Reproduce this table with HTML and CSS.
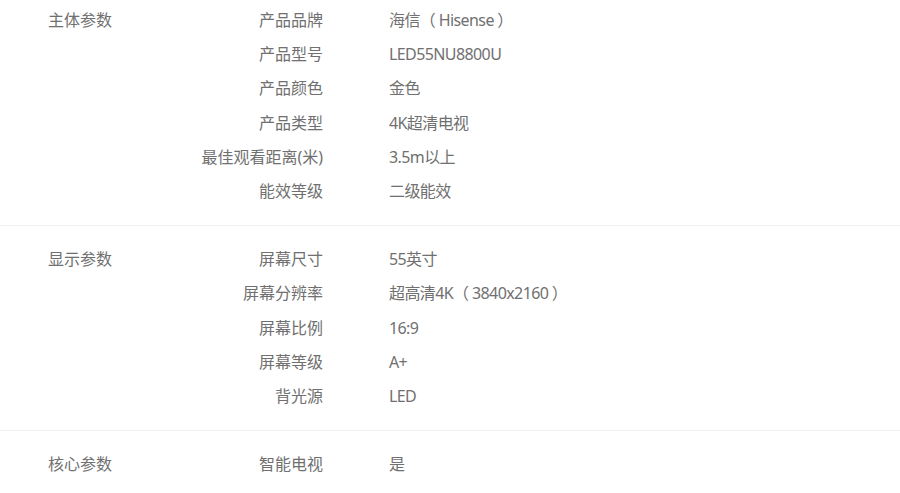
FILE: index.html
```html
<!DOCTYPE html>
<html lang="zh-CN">
<head>
  <meta charset="UTF-8">
  <meta name="viewport" content="width=device-width, initial-scale=1.0">
  <title>规格参数</title>
  <link rel="stylesheet" href="styles.css">
</head>
<body>
  <div class="spec-table">
    <!-- 主体参数 -->
    <div class="spec-group">
      <div class="group-title">主体参数</div>
      <dl class="spec-list">
        <dt>产品品牌</dt><dd>海信（ Hisense ）</dd>
        <dt>产品型号</dt><dd>LED55NU8800U</dd>
        <dt>产品颜色</dt><dd>金色</dd>
        <dt>产品类型</dt><dd>4K超清电视</dd>
        <dt>最佳观看距离(米)</dt><dd>3.5m以上</dd>
        <dt>能效等级</dt><dd>二级能效</dd>
      </dl>
    </div>

    <!-- 显示参数 -->
    <div class="spec-group">
      <div class="group-title">显示参数</div>
      <dl class="spec-list">
        <dt>屏幕尺寸</dt><dd>55英寸</dd>
        <dt>屏幕分辨率</dt><dd>超高清4K（ 3840x2160 ）</dd>
        <dt>屏幕比例</dt><dd>16:9</dd>
        <dt>屏幕等级</dt><dd>A+</dd>
        <dt>背光源</dt><dd>LED</dd>
      </dl>
    </div>

    <!-- 核心参数 -->
    <div class="spec-group">
      <div class="group-title">核心参数</div>
      <dl class="spec-list">
        <dt>智能电视</dt><dd>是</dd>
      </dl>
    </div>
  </div>
</body>
</html>
```

FILE: styles.css
```css
body {
  margin: 0;
  background-color: #fff;
  font-family: "Noto Sans", "Noto Sans CJK SC", sans-serif;
  font-size: 16px;
  color: #707070;
}

.spec-group {
  display: flex;
  align-items: flex-start;
  padding: 16px 0 17px 48px;
  border-bottom: 1px solid #f0f0f0;
}

.spec-group:first-child {
  padding-top: 3px;
}

.group-title {
  width: 120px;
  line-height: 34.2px;
}

.spec-list {
  margin: 0;
  display: grid;
  grid-template-columns: 155px 1fr;
  column-gap: 66px;
  line-height: 34.2px;
}

.spec-list dt {
  text-align: right;
  white-space: nowrap;
}

.spec-list dd {
  margin: 0;
  white-space: pre;
  letter-spacing: -0.6px;
}
```
